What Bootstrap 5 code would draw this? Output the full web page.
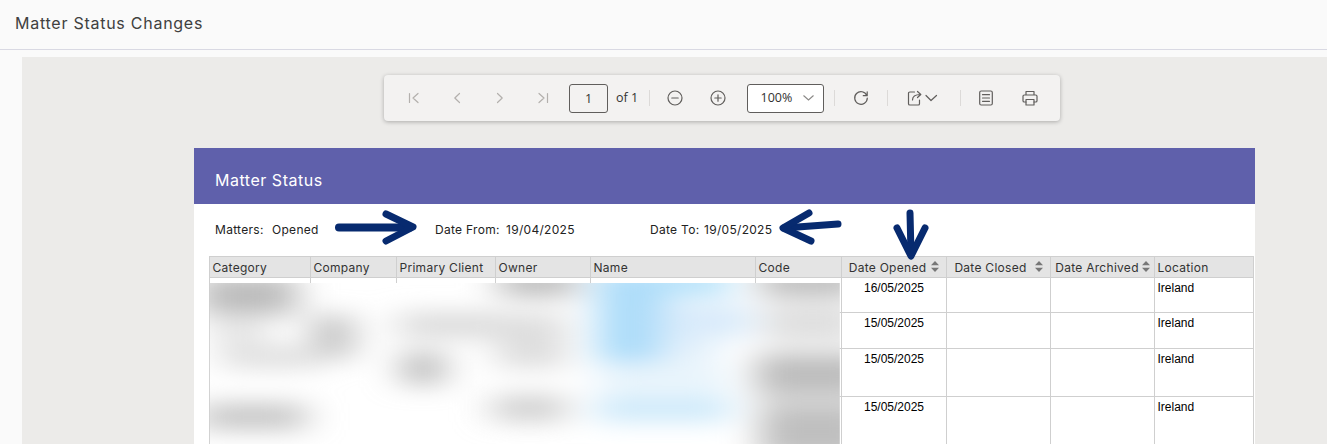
<!DOCTYPE html>
<html lang="en">
<head>
<meta charset="utf-8">
<title>Matter Status Changes</title>
<link href="https://cdn.jsdelivr.net/npm/bootstrap@5.3.0/dist/css/bootstrap.min.css" rel="stylesheet">
<style>
html,body{height:444px;overflow:hidden;background:#fafafa;}
body{font-family:Inter,"Liberation Sans",sans-serif;position:relative;}
.topbar{height:50px;border-bottom:1px solid #d9d9e3;padding:0 0 3px 15px;color:#404040;font-size:16px;font-weight:400;letter-spacing:.74px;}
.viewer{margin:7px 0 0 22px;height:387px;background:#ecebe9;overflow:hidden;padding-top:18px;}
.tools{margin-left:362px;width:676px;height:46px;background:#f3f2f1;border-radius:4px;box-shadow:0 1px 4px rgba(0,0,0,.28);padding-left:8.5px;font-family:"Open Sans",sans-serif;font-size:12.5px;color:#323130;}
.tbtn{width:43px;height:46px;flex:none;display:flex;align-items:center;justify-content:center;}
.tbtn svg{fill:none;stroke:#605e5c;stroke-width:1.2;stroke-linecap:round;stroke-linejoin:round;}
.tbtn.off svg{stroke:#b3b0ad;}
.pageno{width:39px;height:29px;margin-left:4.5px;border:1px solid #605e5c;border-radius:3px;line-height:27px;}
.ofn{margin-left:8px;width:21px;white-space:nowrap;}
.tsep{width:1px;height:16px;background:#dcdad8;flex:none;}
.s1{margin-left:11.5px;margin-right:3.5px;}
.s2{margin-left:10.5px;}
.zoomsel{width:77px;height:29px;margin-left:7.5px;border:1px solid #605e5c;border-radius:3px;background:#fff;padding:0 9px 0 13px;}
.zoomsel svg{fill:none;stroke:#8a8886;stroke-width:1.1;}
.w52{width:52px;}
.w49{width:49px;}
.w30{width:30px;}
.s4{margin-left:8.5px;}
.s5{margin-left:11.5px;}
.s6{margin-left:4.500px;}
.report{margin:27px 0 0 172px;width:1061px;background:#fff;height:400px;font-family:Inter,sans-serif;}
.rhead{height:56px;background:#5f60ab;color:#fff;font-size:16px;font-weight:400;padding:0 0 0 21px;line-height:64px;letter-spacing:.52px;}
.meta{height:52px;padding:0 0 0 21px;font-size:12px;color:#222;letter-spacing:.3px;}
.mitem{flex:none;white-space:nowrap;}
.m1{width:220px}.m2{width:215px}
.lab{display:inline-block;}
.l1{width:57px}.l2{width:71px}.l3{width:54px}
.table.sheet{table-layout:fixed;width:1045px;margin:0 0 0 15px;border-color:#cfcfcf;--bs-table-bg:transparent;}
.sheet>:not(caption)>*>*{padding:0 2.5px;border-width:1px;border-color:#cfcfcf;font-size:12px;color:#000;box-shadow:none;}
.sheet th{background:#e4e4e4;height:21px;font-weight:400;font-family:Inter,sans-serif;font-size:12px;color:#333;white-space:nowrap;letter-spacing:.28px;overflow:hidden;}
.sheet td{font-family:"Liberation Sans",sans-serif;vertical-align:top;line-height:18px;padding-top:1px;}
.sheet tr.h1 td{height:35px}.sheet tr.h2 td{height:36px}.sheet tr.h3 td{height:48px}.sheet tr.h4 td{height:60px}
.c1{width:101px}.c2{width:86px}.c3{width:99px}.c4{width:95px}.c5{width:165px}.c6{width:86px}.c7{width:105px}.c8{width:104px}.c9{width:104px}.c10{width:99px}
.sorti{fill:#777;margin-left:5px;vertical-align:0;}
.g7{margin-left:8px}.g3{margin-left:3px}
.blur{position:absolute;left:200px;top:275px;width:660px;height:169px;display:block;}
.arrows{position:absolute;left:0;top:0;width:1327px;height:444px;pointer-events:none;}
.arrows path{fill:none;stroke:#072a6f;stroke-linecap:round;stroke-linejoin:round;}
</style>
</head>
<body>
<div class="topbar d-flex align-items-center">Matter Status Changes</div>
<div class="viewer">
  <div class="tools d-flex align-items-center">
    <div class="tbtn off"><svg width="12" height="12" viewBox="0 0 12 12"><path d="M1.500 1.500v9M10 1.500 5 6l5 4.500"/></svg></div>
    <div class="tbtn off"><svg width="12" height="12" viewBox="0 0 12 12"><path d="M8.500 1.500 3.800 6l4.700 4.500"/></svg></div>
    <div class="tbtn off"><svg width="12" height="12" viewBox="0 0 12 12"><path d="M3.500 1.500 8.200 6l-4.700 4.500"/></svg></div>
    <div class="tbtn off"><svg width="12" height="12" viewBox="0 0 12 12"><path d="M10.500 1.500v9M2 1.500 7 6l-5 4.500"/></svg></div>
    <div class="pageno text-center">1</div>
    <div class="ofn">of 1</div>
    <div class="tsep s1"></div>
    <div class="tbtn"><svg width="16" height="16" viewBox="0 0 16 16"><circle cx="8" cy="8" r="7"/><path d="M4.800 8h6.400"/></svg></div>
    <div class="tbtn"><svg width="16" height="16" viewBox="0 0 16 16"><circle cx="8" cy="8" r="7"/><path d="M4.800 8h6.400M8 4.800v6.400"/></svg></div>
    <div class="zoomsel d-flex align-items-center justify-content-between"><span>100%</span><svg width="11" height="6" viewBox="0 0 11 6"><path d="M.5.5 5.500 5 10.500.5"/></svg></div>
    <div class="tsep s2"></div>
    <div class="tbtn w52"><svg width="16" height="16" viewBox="0 0 16 16"><path d="M13.800 5.500A6.300 6.300 0 1 0 14.300 8M14.200 1.800v3.900h-3.900"/></svg></div>
    <div class="tsep"></div>
    <div class="tbtn w52 s4"><svg width="31" height="16" viewBox="0 0 31 16"><path d="M7.500 2H2.800A1.300 1.300 0 0 0 1.500 3.300v10.400A1.300 1.300 0 0 0 2.800 15h8.400a1.300 1.300 0 0 0 1.300-1.300V10M5.500 10c0-3.500 2.500-5.500 8-5.500M10.500 1.500l3.300 3-3.300 3M19 5.500l5 5 5.500-5"/></svg></div>
    <div class="tsep s5"></div>
    <div class="tbtn w49"><svg width="14" height="16" viewBox="0 0 14 16"><rect x=".7" y="1" width="12.600" height="14" rx="1.500"/><path d="M3.500 4.700h7M3.500 8h7M3.500 11.300h7"/></svg></div>
    <div class="tbtn w30 s6"><svg width="16" height="16" viewBox="0 0 16 16"><path d="M4 5V1.500h8V5M4 12H2.300A1.300 1.300 0 0 1 1 10.700V6.300A1.300 1.300 0 0 1 2.300 5h11.400A1.300 1.300 0 0 1 15 6.300v4.400a1.300 1.300 0 0 1-1.300 1.300H12"/><rect x="4" y="9.500" width="8" height="5.500"/></svg></div>
  </div>
  <div class="report">
    <div class="rhead">Matter Status</div>
    <div class="meta d-flex align-items-center">
      <div class="mitem m1"><span class="lab l1">Matters:</span>Opened</div>
      <div class="mitem m2"><span class="lab l2">Date From:</span>19/04/2025</div>
      <div class="mitem"><span class="lab l3">Date To:</span>19/05/2025</div>
    </div>
    <table class="table table-bordered sheet">
      <colgroup><col class="c1"><col class="c2"><col class="c3"><col class="c4"><col class="c5"><col class="c6"><col class="c7"><col class="c8"><col class="c9"><col class="c10"></colgroup>
      <thead>
        <tr>
          <th>Category</th><th>Company</th><th>Primary Client</th><th>Owner</th><th>Name</th><th>Code</th>
          <th class="text-center">Date Opened<svg class="sorti" width="8" height="11" viewBox="0 0 8 11"><path d="M4 0l4 4.200H0zM4 11 0 6.800h8z"/></svg></th>
          <th class="text-center">Date Closed<svg class="sorti g7" width="8" height="11" viewBox="0 0 8 11"><path d="M4 0l4 4.200H0zM4 11 0 6.800h8z"/></svg></th>
          <th class="text-center">Date Archived<svg class="sorti g3" width="8" height="11" viewBox="0 0 8 11"><path d="M4 0l4 4.200H0zM4 11 0 6.800h8z"/></svg></th>
          <th>Location</th>
        </tr>
      </thead>
      <tbody>
        <tr class="h1"><td></td><td></td><td></td><td></td><td></td><td></td><td class="text-center">16/05/2025</td><td></td><td></td><td>Ireland</td></tr>
        <tr class="h2"><td></td><td></td><td></td><td></td><td></td><td></td><td class="text-center">15/05/2025</td><td></td><td></td><td>Ireland</td></tr>
        <tr class="h3"><td></td><td></td><td></td><td></td><td></td><td></td><td class="text-center">15/05/2025</td><td></td><td></td><td>Ireland</td></tr>
        <tr class="h4"><td></td><td></td><td></td><td></td><td></td><td></td><td class="text-center">15/05/2025</td><td></td><td></td><td>Ireland</td></tr>
      </tbody>
    </table>
  </div>
</div>
<svg class="blur" viewBox="0 0 1568 507" preserveAspectRatio="none" aria-hidden="true">
  <defs>
    <filter id="bl" filterUnits="userSpaceOnUse" x="-200" y="-200" width="2000" height="900"><feGaussianBlur stdDeviation="44 34"/></filter>
    <clipPath id="cp"><rect x="23" y="24" width="1497" height="483"/></clipPath>
  </defs>
  <g clip-path="url(#cp)">
    <rect x="23" y="24" width="1497" height="483" fill="#fff"/>
    <g filter="url(#bl)">
      <rect x="0" y="0" width="230" height="120" fill="#bcbcbc"/>
      <rect x="30" y="130" width="130" height="80" fill="#e4e4e4"/>
      <rect x="265" y="120" width="100" height="130" fill="#c4c4c4"/>
      <rect x="50" y="215" width="240" height="65" fill="#dedede"/>
      <rect x="0" y="385" width="250" height="80" fill="#c6c6c6"/>
      <rect x="470" y="110" width="240" height="80" fill="#dcdcdc"/>
      <rect x="480" y="230" width="100" height="100" fill="#bebebe"/>
      <rect x="710" y="-20" width="185" height="85" fill="#bcbcbc"/>
      <rect x="705" y="115" width="165" height="165" fill="#dedede"/>
      <rect x="695" y="360" width="175" height="80" fill="#d0d0d0"/>
      <rect x="940" y="-20" width="170" height="285" fill="#aeddf9"/>
      <rect x="1100" y="-20" width="160" height="85" fill="#b6e2fa"/>
      <rect x="1100" y="90" width="210" height="95" fill="#d8eafa"/>
      <rect x="1100" y="180" width="130" height="85" fill="#e2f0fb"/>
      <rect x="945" y="280" width="310" height="60" fill="#e4f2fb"/>
      <rect x="940" y="360" width="320" height="80" fill="#cde9fa"/>
      <rect x="1330" y="-20" width="240" height="85" fill="#bcbcbc"/>
      <rect x="1340" y="90" width="230" height="110" fill="#dedede"/>
      <rect x="1320" y="235" width="280" height="130" fill="#bdbdbd"/>
      <rect x="1330" y="385" width="270" height="170" fill="#bfbfbf"/>
    </g>
  </g>
</svg>
<svg class="arrows" viewBox="0 0 1327 444" aria-hidden="true">
  <path stroke-width="8" d="M339 227.500 410 227.500"/>
  <path stroke-width="7" d="M386 214 413 227 386 241"/>
  <path stroke-width="7" d="M838 224 784 228"/>
  <path stroke-width="7" d="M809 213 783 228 811 241"/>
  <path stroke-width="7" d="M910 213 911 254"/>
  <path stroke-width="7" d="M897 228 911 256 925 228"/>
</svg>
</body>
</html>
